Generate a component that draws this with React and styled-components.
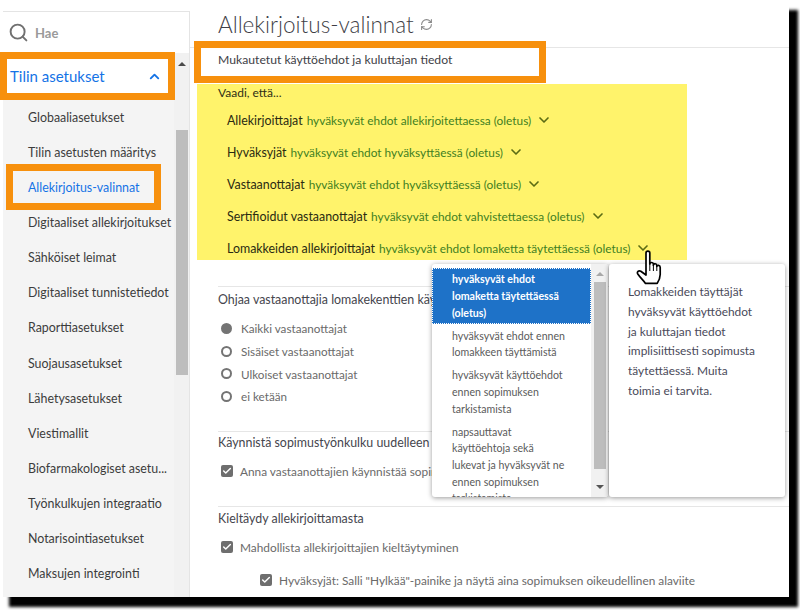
import styled, { createGlobalStyle } from 'styled-components'
import { Check, ChevronDown, ChevronUp, RefreshCw, Search } from 'lucide-react'

const GlobalStyle = createGlobalStyle`
  html, body {
    margin: 0;
    padding: 0;
    background: #fff;
    font-family: "Lato", "Liberation Sans", sans-serif;
  }
`

const Page = styled.div`
  width: 800px;
  height: 610px;
  overflow: hidden;
`

const Window = styled.div`
  width: 789px;
  height: 597px;
  display: flex;
  background: #fff;
  box-shadow: 9px 10px 3px #000;
  position: relative;
  overflow: hidden;
`

const Sidebar = styled.aside`
  width: 186px;
  margin: 11px 0 0 3px;
  display: flex;
  flex-direction: column;
  background: #f4f4f4;
  border-top: 1px solid #e4e4e4;
  border-right: 1px solid #e4e4e4;
  flex-shrink: 0;
`

const SearchRow = styled.div`
  height: 41px;
  background: #fff;
  display: flex;
  align-items: center;
  gap: 6px;
  padding-left: 5px;
  color: #707070;
`

const SearchLabel = styled.span`
  font-size: 13px;
  font-weight: 700;
  color: #9a9a9a;
`

const NavArea = styled.div`
  flex: 1;
  display: flex;
  min-height: 0;
`

const NavList = styled.nav`
  flex: 1;
  min-width: 0;
`

const AccountHeader = styled.div`
  height: 34px;
  margin: 6px 6px 6.5px 4px;
  padding: 0 6px 0 3px;
  background: #fff;
  outline: 7px solid #f7900d;
  display: flex;
  align-items: center;
  justify-content: space-between;
  color: #1473e6;
  font-size: 15px;
  position: relative;
`

const NavItem = styled.a`
  display: flex;
  align-items: center;
  box-sizing: border-box;
  height: ${(p) => (p.$boxed ? '32px' : '35.15px')};
  margin: ${(p) => (p.$boxed ? '1.575px 20px 1.575px 10px' : '0 0 0 10px')};
  padding-left: 15px;
  font-size: 12.4px;
  white-space: nowrap;
  color: ${(p) => (p.$boxed ? '#1473e6' : '#3c3c3c')};
  outline: ${(p) => (p.$boxed ? '7px solid #f7900d' : 'none')};
  position: relative;
`

const ScrollTrack = styled.div`
  width: 15px;
  flex-shrink: 0;
  display: flex;
  flex-direction: column;
  align-items: center;
  background: #f1f1f1;
`

const ArrowUp = styled.div`
  margin-top: ${(p) => p.$top || '9px'};
  width: 0;
  height: 0;
  border-left: 4px solid transparent;
  border-right: 4px solid transparent;
  border-bottom: 4px solid ${(p) => p.$color || '#4a4a4a'};
`

const ArrowDown = styled.div`
  width: 0;
  height: 0;
  border-left: 4px solid transparent;
  border-right: 4px solid transparent;
  border-top: 4px solid #555;
`

const ScrollThumb = styled.div`
  width: 12px;
  height: ${(p) => p.$height};
  margin-top: ${(p) => p.$top};
  margin-bottom: ${(p) => p.$bottom || 0};
  background: #bdbdbd;
`

const Main = styled.main`
  flex: 1;
  min-width: 0;
  position: relative;
`

const TitleBar = styled.header`
  height: 45px;
  padding: 2px 0 0 28px;
  border-bottom: 1px solid #e6e6e6;
  display: flex;
  align-items: center;
  gap: 6px;
  color: #8a8a8a;
`

const Title = styled.h1`
  margin: 0;
  font-size: 22.5px;
  font-weight: 300;
  color: #3e3e46;
  white-space: nowrap;
`

const SubHeading = styled.div`
  width: 321px;
  height: 23px;
  margin-left: 11px;
  padding: 0 0 5px 17px;
  display: flex;
  align-items: center;
  background: #fff;
  outline: 7px solid #f7900d;
  font-size: 12.2px;
  color: #3e3e46;
  position: relative;
`

const YellowPanel = styled.section`
  width: 469px;
  height: 176px;
  margin: 8px 0 0 7px;
  padding-left: 21px;
  background: #fff36b;
`

const RequireLine = styled.div`
  height: 16px;
  line-height: 17px;
  font-size: 12px;
  color: #2f2f14;
`

const RoleList = styled.div`
  margin-top: 4px;
  padding-left: 9px;
`

const RoleRow = styled.div`
  height: 32px;
  display: flex;
  align-items: center;
  gap: 4px;
  font-size: 12.4px;
  white-space: nowrap;
  color: #2a2a12;
`

const RoleValue = styled.span`
  display: inline-flex;
  align-items: center;
  gap: 5px;
  font-size: 11.85px;
  color: #3f7f22;
`

const Section = styled.section`
  margin: ${(p) => p.$top || 0} 0 0 28px;
  border-top: 1px solid #e6e6e6;
  height: ${(p) => p.$height};
  box-sizing: border-box;
`

const SectionTitle = styled.div`
  margin-top: ${(p) => p.$top || '3px'};
  height: 20px;
  line-height: 20px;
  font-size: 12.4px;
  color: #45454d;
  white-space: nowrap;
`

const RadioGroup = styled.div`
  margin-top: 7px;
  padding-left: 3px;
`

const RadioRow = styled.label`
  height: 22.7px;
  display: flex;
  align-items: center;
  gap: 9px;
  font-size: 11.7px;
  color: #6a6a6a;
`

const RadioDot = styled.span`
  box-sizing: border-box;
  width: 11px;
  height: 11px;
  border-radius: 50%;
  border: 2px solid #747474;
  background: ${(p) => (p.$checked ? '#747474' : '#fff')};
`

const CheckRow = styled.label`
  margin: ${(p) => p.$top} 0 0 ${(p) => (p.$nested ? '42px' : '3px')};
  display: flex;
  align-items: center;
  gap: 7px;
  height: 18px;
  font-size: 11.85px;
  color: #6a6a6a;
  white-space: nowrap;
`

const CheckBox = styled.span`
  width: 12px;
  height: 12px;
  border-radius: 2px;
  background: #6e6e6e;
  color: #fff;
  display: flex;
  align-items: center;
  justify-content: center;
`

const Popup = styled.div`
  position: absolute;
  top: 264px;
  left: 242px;
  display: flex;
  gap: 1px;
  height: 233px;
`

const OptionPane = styled.div`
  width: 176px;
  display: flex;
  background: #fff;
  border-radius: 3px;
  box-shadow: 0 1px 5px rgba(0, 0, 0, 0.4);
  overflow: hidden;
`

const OptionList = styled.div`
  width: 159px;
  padding-top: 4px;
  flex-shrink: 0;
  overflow: hidden;
`

const Option = styled.div`
  box-sizing: border-box;
  padding: 3.15px 23px 3.15px 20px;
  font-size: 10.6px;
  line-height: 16.7px;
  font-weight: ${(p) => (p.$selected ? 700 : 400)};
  color: ${(p) => (p.$selected ? '#fff' : '#5a5a5a')};
  background: ${(p) => (p.$selected ? '#1e72c8' : 'transparent')};
  outline: ${(p) => (p.$selected ? '1px dotted #fff' : 'none')};
  outline-offset: -1px;
`

const PopupScroll = styled.div`
  flex: 1;
  display: flex;
  flex-direction: column;
  align-items: center;
  background: #f1f1f1;
`

const InfoPane = styled.div`
  width: 176px;
  box-sizing: border-box;
  padding: 18px 10px 0 19px;
  background: #fff;
  border-radius: 3px;
  box-shadow: 0 1px 5px rgba(0, 0, 0, 0.4);
  font-size: 11.9px;
  line-height: 19.8px;
  color: #4a4a5a;
`

const HandCursor = styled.svg`
  position: absolute;
  top: 250px;
  left: 446px;
`

const roles = [
  ['Allekirjoittajat', 'hyväksyvät ehdot allekirjoitettaessa (oletus)'],
  ['Hyväksyjät', 'hyväksyvät ehdot hyväksyttäessä (oletus)'],
  ['Vastaanottajat', 'hyväksyvät ehdot hyväksyttäessä (oletus)'],
  ['Sertifioidut vastaanottajat', 'hyväksyvät ehdot vahvistettaessa (oletus)'],
  ['Lomakkeiden allekirjoittajat', 'hyväksyvät ehdot lomaketta täytettäessä (oletus)'],
]

const navItems = [
  'Globaaliasetukset',
  'Tilin asetusten määritys',
  'Allekirjoitus-valinnat',
  'Digitaaliset allekirjoitukset',
  'Sähköiset leimat',
  'Digitaaliset tunnistetiedot',
  'Raporttiasetukset',
  'Suojausasetukset',
  'Lähetysasetukset',
  'Viestimallit',
  'Biofarmakologiset asetu...',
  'Työnkulkujen integraatio',
  'Notarisointiasetukset',
  'Maksujen integrointi',
]

const radios = ['Kaikki vastaanottajat', 'Sisäiset vastaanottajat', 'Ulkoiset vastaanottajat', 'ei ketään']

const App = () => {
  return (
    <Page>
      <GlobalStyle />
      <Window>
        <Sidebar>
          <SearchRow>
            <Search size={21} strokeWidth={2.2} />
            <SearchLabel>Hae</SearchLabel>
          </SearchRow>
          <NavArea>
            <NavList>
              <AccountHeader>
                Tilin asetukset
                <ChevronUp size={15} strokeWidth={3} />
              </AccountHeader>
              {navItems.map((item) => (
                <NavItem key={item} $boxed={item === 'Allekirjoitus-valinnat'}>{item}</NavItem>
              ))}
            </NavList>
            <ScrollTrack>
              <ArrowUp />
              <ScrollThumb $top="64px" $height="245px" />
            </ScrollTrack>
          </NavArea>
        </Sidebar>
        <Main>
          <TitleBar>
            <Title>Allekirjoitus-valinnat</Title>
            <RefreshCw size={13} strokeWidth={2} />
          </TitleBar>
          <SubHeading>Mukautetut käyttöehdot ja kuluttajan tiedot</SubHeading>
          <YellowPanel>
            <RequireLine>Vaadi, että...</RequireLine>
            <RoleList>
              {roles.map(([role, value]) => (
                <RoleRow key={role}>
                  {role}
                  <RoleValue>
                    {value}
                    <ChevronDown size={16} strokeWidth={2.5} color="#5b6b14" />
                  </RoleValue>
                </RoleRow>
              ))}
            </RoleList>
          </YellowPanel>
          <Section $top="26px" $height="145px">
            <SectionTitle>Ohjaa vastaanottajia lomakekenttien käytössä</SectionTitle>
            <RadioGroup>
              {radios.map((label, i) => (
                <RadioRow key={label}>
                  <RadioDot $checked={i === 0} />
                  {label}
                </RadioRow>
              ))}
            </RadioGroup>
          </Section>
          <Section $height="75px">
            <SectionTitle $top="1px">Käynnistä sopimustyönkulku uudelleen</SectionTitle>
            <CheckRow $top="9px">
              <CheckBox><Check size={10} strokeWidth={3.5} /></CheckBox>
              Anna vastaanottajien käynnistää sopimustyönkulku
            </CheckRow>
          </Section>
          <Section>
            <SectionTitle $top="2px">Kieltäydy allekirjoittamasta</SectionTitle>
            <CheckRow $top="9px">
              <CheckBox><Check size={10} strokeWidth={3.5} /></CheckBox>
              Mahdollista allekirjoittajien kieltäytyminen
            </CheckRow>
            <CheckRow $top="15px" $nested>
              <CheckBox><Check size={10} strokeWidth={3.5} /></CheckBox>
              Hyväksyjät: Salli "Hylkää"-painike ja näytä aina sopimuksen oikeudellinen alaviite
            </CheckRow>
          </Section>
          <Popup>
            <OptionPane>
              <OptionList>
                <Option $selected>hyväksyvät ehdot lomaketta täytettäessä (oletus)</Option>
                <Option>hyväksyvät ehdot ennen lomakkeen täyttämistä</Option>
                <Option>hyväksyvät käyttöehdot ennen sopimuksen tarkistamista</Option>
                <Option>napsauttavat käyttöehtoja sekä lukevat ja hyväksyvät ne ennen sopimuksen tarkistamista</Option>
              </OptionList>
              <PopupScroll>
                <ArrowUp $top="8px" $color="#a8a8a8" />
                <ScrollThumb $top="6px" $height="187px" $bottom="16px" />
                <ArrowDown />
              </PopupScroll>
            </OptionPane>
            <InfoPane>
              Lomakkeiden täyttäjät<br />
              hyväksyvät käyttöehdot<br />
              ja kuluttajan tiedot<br />
              implisiittisesti sopimusta<br />
              täytettäessä. Muita<br />
              toimia ei tarvita.
            </InfoPane>
          </Popup>
          <HandCursor width="28" height="36" viewBox="0 0 28 36">
            <path
              d="M10 3c0-2.4 3.8-2.4 3.8 0v11c.4-2 3.6-2 3.6.2v1c.4-2 3.4-2 3.4.2v1c.4-1.6 3.4-1.4 3.4 1v7c0 4-1.2 6-3 9H9.5C7 30 4.500 28 1.800 24c-1.200-2 .800-4 3-2.800L10 25Z"
              fill="#fff"
              stroke="#000"
              strokeWidth="1.700"
              strokeLinejoin="round"
            />
            <path d="M13.800 14v7M17.400 15v6M20.800 16v5" stroke="#000" strokeWidth="1" fill="none" />
          </HandCursor>
        </Main>
      </Window>
    </Page>
  )
}

export default App
